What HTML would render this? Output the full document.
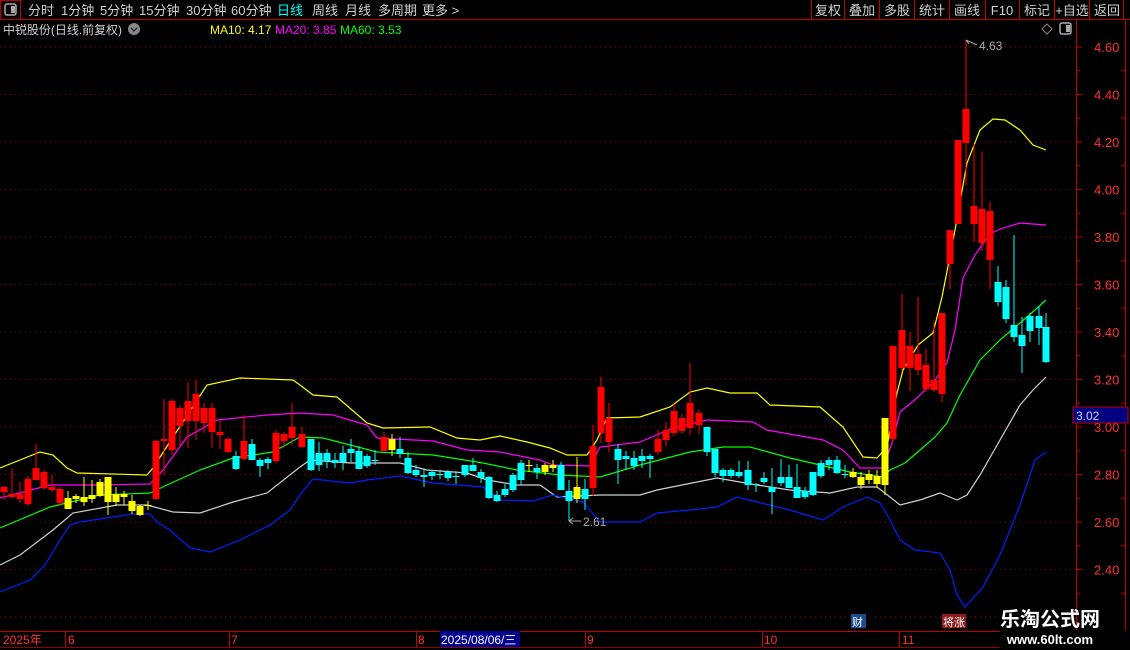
<!DOCTYPE html>
<html><head><meta charset="utf-8"><style>
html,body{margin:0;padding:0;background:#000;width:1130px;height:650px;overflow:hidden}
svg{display:block}
text{font-family:"Liberation Sans","Noto Sans CJK SC",sans-serif}
</style></head><body>
<svg id="s" width="1130" height="650" xmlns="http://www.w3.org/2000/svg">
<rect width="1130" height="650" fill="#000"/>
<line x1="0" y1="19.5" x2="1130" y2="19.5" stroke="#c00000"/>
<rect x="0.5" y="0.5" width="20" height="19" fill="none" stroke="#c00000"/>
<rect x="5" y="4" width="11" height="11" rx="2" fill="none" stroke="#aaa" stroke-width="1.5"/>
<rect x="11" y="6" width="4" height="7" fill="#aaa"/>
<g font-size="13" fill="#d0d0d0">
<text x="28" y="15">分时</text><text x="61" y="15">1分钟</text><text x="100" y="15">5分钟</text>
<text x="139" y="15">15分钟</text><text x="186" y="15">30分钟</text><text x="231" y="15">60分钟</text>
<text x="277" y="15" fill="#00ffff">日线</text><text x="312" y="15">周线</text><text x="345" y="15">月线</text>
<text x="378" y="15">多周期</text><text x="422" y="15">更多 &gt;</text>
</g>
<g stroke="#c00000"><line x1="811.5" y1="0" x2="811.5" y2="19"/><line x1="844.5" y1="0" x2="844.5" y2="19"/><line x1="879.5" y1="0" x2="879.5" y2="19"/><line x1="914.5" y1="0" x2="914.5" y2="19"/><line x1="949.5" y1="0" x2="949.5" y2="19"/><line x1="985.5" y1="0" x2="985.5" y2="19"/><line x1="1019.5" y1="0" x2="1019.5" y2="19"/><line x1="1054.5" y1="0" x2="1054.5" y2="19"/><line x1="1089.5" y1="0" x2="1089.5" y2="19"/><line x1="1123.5" y1="0" x2="1123.5" y2="19"/></g>
<g font-size="13" fill="#d0d0d0" text-anchor="middle">
<text x="828" y="15">复权</text><text x="862" y="15">叠加</text><text x="897" y="15">多股</text><text x="932" y="15">统计</text><text x="967" y="15">画线</text><text x="1002" y="15">F10</text><text x="1037" y="15">标记</text><text x="1072" y="15">+自选</text><text x="1107" y="15">返回</text>
</g>
<text x="3" y="34" font-size="12" fill="#d0d0d0" textLength="119" lengthAdjust="spacingAndGlyphs">中锐股份(日线.前复权)</text>
<circle cx="134" cy="29" r="6" fill="#888"/><path d="M131 28 L134 31 L137 28" stroke="#222" fill="none" stroke-width="1.3"/>
<text x="210" y="34" font-size="12" fill="#ffff00">MA10: 4.17</text>
<text x="275" y="34" font-size="12" fill="#ff00ff">MA20: 3.85</text>
<text x="340" y="34" font-size="12" fill="#00ff00">MA60: 3.53</text>
<path d="M1047 24 L1052 29 L1047 34 L1042 29Z" fill="none" stroke="#888"/>
<rect x="1060" y="23" width="11" height="11" rx="2" fill="none" stroke="#aaa" stroke-width="1.5"/><rect x="1066" y="25" width="4" height="7" fill="#aaa"/>
<line x1="1076.5" y1="20" x2="1076.5" y2="630" stroke="#c00000"/>
<line x1="1125.5" y1="20" x2="1125.5" y2="630" stroke="#c00000"/>
<g id="grid"></g>
<g id="lines" fill="none" stroke-width="1.2"></g>
<g id="cand"></g>
<rect x="1073" y="407" width="55" height="16" fill="#000080" stroke="#c00000"/>
<text x="1076" y="420" font-size="12" fill="#d0d0ff">3.02</text>
<line x1="966" y1="40" x2="966" y2="110" stroke="#ff0000"/>
<path d="M966 40 L977 45 M966 40 L969 44" stroke="#aaa" fill="none"/>
<text x="979" y="50" font-size="12" fill="#aaa">4.63</text>
<path d="M569 521 L581 521 M569 521 L573 518 M569 521 L573 524" stroke="#aaa" fill="none"/>
<text x="583" y="526" font-size="12" fill="#aaa">2.61</text>
<line x1="0" y1="617" x2="1000" y2="617" stroke="#c00000" stroke-dasharray="1,4"/>
<rect x="851" y="614" width="15" height="14" fill="#1c4a8a"/><text x="852" y="626" font-size="11" fill="#fff">财</text>
<rect x="942" y="614" width="24" height="14" fill="#8a1c1c"/><text x="943" y="626" font-size="11" fill="#fff">将涨</text>
<line x1="0" y1="631.5" x2="1000" y2="631.5" stroke="#c00000"/>
<line x1="0" y1="647.5" x2="1000" y2="647.5" stroke="#c00000" stroke-width="0.8"/>
<g stroke="#c00000"><line x1="65.5" y1="631" x2="65.5" y2="647"/><line x1="229.5" y1="631" x2="229.5" y2="647"/><line x1="416.5" y1="631" x2="416.5" y2="647"/><line x1="585.5" y1="631" x2="585.5" y2="647"/><line x1="762.5" y1="631" x2="762.5" y2="647"/><line x1="899.5" y1="631" x2="899.5" y2="647"/></g>
<g font-size="12" fill="#ff3030">
<text x="3" y="644">2025年</text><text x="68" y="644">6</text><text x="231" y="644">7</text><text x="418" y="644">8</text><text x="587" y="644">9</text><text x="764" y="644">10</text><text x="902" y="644">11</text>
</g>
<rect x="440" y="631" width="80" height="16" fill="#000090"/>
<text x="441" y="644" font-size="12" fill="#fff">2025/08/06/三</text>
<text x="1050" y="626" font-size="20" font-weight="bold" fill="#fff" text-anchor="middle" font-family="'Noto Serif CJK SC','Noto Sans CJK SC',serif">乐淘公式网</text>
<text x="1050" y="644" font-size="13" font-weight="bold" fill="#fff" text-anchor="middle" font-family="'Liberation Serif',serif">www.60lt.com</text>
</svg>
<script>
var NS="http://www.w3.org/2000/svg";
function el(p,t,a){var e=document.createElementNS(NS,t);for(var k in a)e.setAttribute(k,a[k]);p.appendChild(e);return e;}
var g=document.getElementById('grid');
var labs=["4.60","4.40","4.20","4.00","3.80","3.60","3.40","3.20","3.00","2.80","2.60","2.40"];
for(var i=0;i<labs.length;i++){var y=47+i*47.5;
el(g,'line',{x1:0,y1:y,x2:1076,y2:y,stroke:'#900000','stroke-dasharray':'1,4'});
el(g,'line',{x1:1076,y1:y,x2:1082,y2:y,stroke:'#c00000'});
var t=el(g,'text',{x:1094,y:y+5,'font-size':13,fill:'#ff3030'});t.textContent=labs[i];}
for(var y=47+23.75;y<620;y+=47.5){el(g,'line',{x1:1076,y1:y,x2:1080,y2:y,stroke:'#c00000'});el(g,'line',{x1:1121,y1:y,x2:1125,y2:y,stroke:'#c00000'});}
var L=document.getElementById('lines');
var lines={
'#ffff00':[[0,468],[40,452],[53,455],[67,468],[77,473],[147,475],[153,468],[173,437],[207,385],[240,378],[293,380],[300,385],[313,395],[337,397],[367,423],[383,428],[430,427],[457,438],[480,440],[500,436],[527,442],[550,448],[567,455],[587,455],[597,440],[607,418],[640,417],[670,407],[690,392],[707,388],[730,393],[757,393],[770,405],[820,407],[843,427],[863,457],[877,458],[887,447],[897,393],[903,370],[918,345],[933,333],[942,297],[955,230],[967,163],[980,130],[993,119],[1005,120],[1020,130],[1033,145],[1046,150]],
'#ff00ff':[[0,498],[50,485],[100,485],[150,484],[163,470],[187,437],[217,420],[267,415],[300,413],[333,415],[367,425],[377,438],[433,441],[467,450],[500,452],[540,460],[553,465],[590,466],[600,447],[640,442],[673,428],[707,420],[753,422],[767,430],[823,440],[843,450],[860,468],[883,468],[893,440],[900,412],[918,397],[935,380],[947,363],[955,330],[963,278],[975,255],[990,234],[1000,229],[1020,223],[1046,225]],
'#00ff00':[[0,528],[50,507],[100,495],[150,493],[167,485],[200,470],[233,458],[273,452],[300,437],[323,438],[377,452],[433,455],[483,463],[517,470],[560,475],[600,477],[640,465],[690,452],[723,447],[750,447],[790,458],[850,472],[883,477],[890,470],[905,463],[920,450],[935,437],[947,423],[960,395],[980,360],[1000,340],[1020,323],[1035,310],[1046,300]],
'#d0d0d0':[[0,565],[20,555],[53,530],[73,513],[117,505],[147,505],[173,512],[200,513],[233,502],[267,493],[300,467],[310,460],[350,463],[400,463],[427,470],[467,473],[487,480],[517,485],[540,485],[557,497],[600,495],[640,495],[657,490],[717,478],[757,485],[790,490],[830,493],[857,487],[877,487],[890,497],[900,505],[920,500],[940,493],[957,500],[967,495],[980,475],[1000,440],[1020,405],[1033,390],[1046,377]],
'#0020ff':[[0,592],[30,580],[45,565],[60,540],[70,525],[80,522],[133,514],[150,514],[157,522],[170,530],[190,548],[210,552],[240,540],[270,525],[290,510],[300,495],[313,479],[350,483],[367,480],[400,476],[433,483],[483,487],[500,500],[533,501],[553,495],[583,502],[600,522],[640,522],[657,513],[690,510],[717,507],[737,497],[757,502],[790,510],[823,520],[843,507],[867,497],[880,503],[890,520],[900,540],[915,550],[940,553],[950,570],[957,595],[965,607],[983,587],[1000,555],[1020,505],[1035,460],[1046,452]]};
for(var c in lines){el(L,'polyline',{points:lines[c].map(function(p){return p.join(',')}).join(' '),stroke:c});}
var R='#ff0000',C='#00ffff',Y='#ffff00';
var d=[[4,487,492,486,500,R],[12,494,497,468,498,R],[20,494,499,482,503,R],[28,479,504,476,506,R],[36,468,480,444,480,R],[44,472,488,470,490,R],[52,487,490,475,492,R],[60,489,503,487,506,R],[68,498,509,491,509,Y],[76,496,499,494,503,Y],[84,497,502,477,506,Y],[92,495,499,480,503,Y],[100,482,496,479,497,Y],[108,477,502,477,515,Y],[116,494,502,487,506,Y],[124,494,497,491,505,Y],[132,501,511,495,514,Y],[140,506,515,505,516,Y],[148,505,506,501,510,Y],[156,441,499,440,500,R],[164,439,441,399,475,R],[172,401,450,399,455,R],[180,408,426,405,448,R],[188,401,421,382,448,R],[196,394,421,380,440,R],[204,408,423,403,433,R],[212,408,432,403,448,R],[220,432,435,420,449,R],[228,439,452,437,453,R],[236,456,469,451,470,C],[244,441,459,415,460,R],[252,444,460,439,460,C],[260,460,466,458,477,C],[268,459,463,457,469,C],[276,433,461,430,463,R],[284,434,441,432,448,R],[292,427,438,403,445,R],[302,434,447,427,448,R],[311,439,470,439,471,C],[319,453,465,442,471,C],[327,453,461,449,468,C],[335,460,463,453,468,C],[343,453,462,446,470,C],[351,449,453,439,463,C],[359,451,469,446,469,C],[367,456,466,454,468,C],[375,460,461,450,465,C],[384,437,451,432,451,R],[392,439,450,434,456,Y],[400,449,454,437,458,C],[408,458,473,452,474,C],[416,470,475,465,477,C],[424,475,477,469,487,C],[432,472,476,470,480,C],[440,474,475,470,479,C],[448,472,478,470,481,C],[456,476,477,471,484,C],[465,465,475,465,477,C],[473,465,471,458,471,C],[481,472,478,469,483,C],[489,477,498,476,499,C],[497,495,501,491,502,C],[505,489,495,484,497,C],[513,475,490,473,492,C],[521,463,480,460,485,C],[529,465,466,460,472,Y],[537,468,472,464,479,C],[545,465,472,463,475,Y],[553,465,468,460,472,Y],[561,465,490,462,490,C],[569,491,501,480,521,C],[577,487,499,457,503,Y],[585,489,499,479,510,C],[593,446,488,425,496,R],[601,387,433,377,443,R],[609,418,442,403,452,R],[618,449,460,444,484,C],[626,456,459,451,470,C],[634,458,466,451,470,C],[642,456,461,449,468,C],[650,456,459,454,478,C],[658,439,452,430,455,R],[666,430,440,422,446,R],[674,411,433,404,436,R],[682,418,431,414,434,R],[690,403,428,363,435,R],[699,413,425,410,434,R],[707,427,452,427,456,C],[715,449,473,449,477,C],[723,470,476,468,482,C],[731,470,476,468,478,C],[739,472,476,461,478,C],[748,470,485,461,490,C],[756,484,485,483,492,C],[764,478,482,472,484,C],[772,487,492,468,514,C],[781,477,483,459,486,C],[789,477,488,465,488,C],[797,487,498,464,498,C],[805,491,497,487,499,C],[813,472,495,472,496,C],[821,463,476,460,478,C],[829,460,465,457,470,C],[837,460,473,456,474,C],[845,474,475,465,478,C],[853,472,477,468,478,Y],[861,477,485,472,489,Y],[869,474,480,470,484,Y],[877,476,484,470,488,Y],[885,418,485,418,495,Y],[893,346,439,346,441,R],[902,330,368,294,371,R],[910,346,368,332,391,R],[918,354,370,297,375,R],[926,365,389,349,392,R],[934,380,390,322,392,R],[942,313,394,313,402,R],[950,230,264,230,289,R],[958,140,224,140,224,R],[966,109,143,40,185,R],[974,206,224,144,242,R],[982,209,243,152,251,R],[990,211,260,202,289,R],[998,282,302,266,306,C],[1006,287,319,280,323,C],[1014,325,337,235,342,C],[1022,335,346,317,373,C],[1030,316,331,313,342,C],[1039,316,328,306,345,C],[1046,327,362,313,363,C]];
var K=document.getElementById('cand');
d.forEach(function(a){var x=a[0];
el(K,'line',{x1:x,y1:a[3],x2:x,y2:a[4],stroke:a[5],'stroke-width':1});
el(K,'rect',{x:x-3.5,y:a[1],width:7,height:Math.max(1,a[2]-a[1]),fill:a[5]});});
</script>
</body></html>
